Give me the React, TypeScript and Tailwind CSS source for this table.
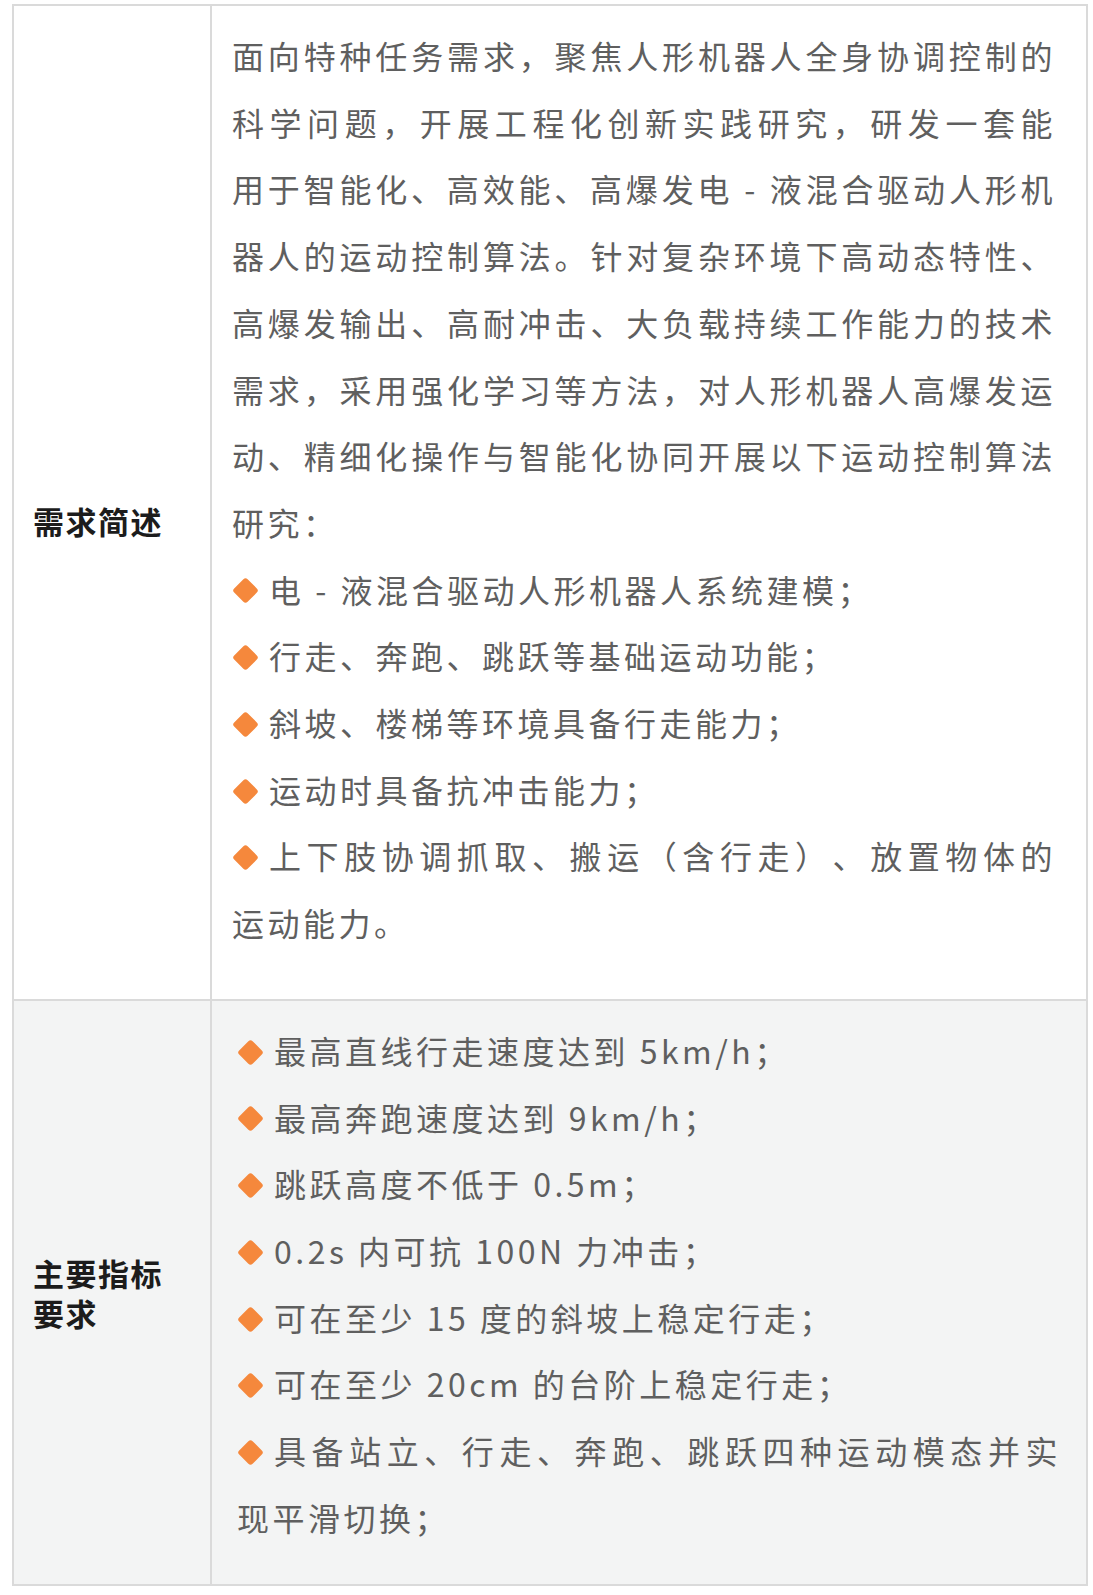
import React from "react";

const font = "font-['Noto_Sans_CJK_SC','Noto_Sans',sans-serif]";

const intro = [
  "面向特种任务需求，聚焦人形机器人全身协调控制的",
  "科学问题，开展工程化创新实践研究，研发一套能",
  "用于智能化、高效能、高爆发电 - 液混合驱动人形机",
  "器人的运动控制算法。针对复杂环境下高动态特性、",
  "高爆发输出、高耐冲击、大负载持续工作能力的技术",
  "需求，采用强化学习等方法，对人形机器人高爆发运",
  "动、精细化操作与智能化协同开展以下运动控制算法",
];

const tasks = [
  "电 - 液混合驱动人形机器人系统建模；",
  "行走、奔跑、跳跃等基础运动功能；",
  "斜坡、楼梯等环境具备行走能力；",
  "运动时具备抗冲击能力；",
];

const targets = [
  "最高直线行走速度达到 5km/h；",
  "最高奔跑速度达到 9km/h；",
  "跳跃高度不低于 0.5m；",
  "0.2s 内可抗 100N 力冲击；",
  "可在至少 15 度的斜坡上稳定行走；",
  "可在至少 20cm 的台阶上稳定行走；",
];

// orange rounded diamond used as the list marker
const Diamond = () => (
  <span className="mr-[11px] inline-flex h-[26px] w-[26px] shrink-0 translate-y-[2px] items-center justify-center">
    <span className="h-[19px] w-[19px] rotate-45 rounded-[3px] bg-[#f5883c]" />
  </span>
);

const Line = ({ text }: { text: string }) => (
  <div className="whitespace-nowrap">{text}</div>
);

const Justified = ({ text }: { text: string }) => (
  <div className="whitespace-nowrap text-justify [text-align-last:justify]">{text}</div>
);

const Bullet = ({ text, justify }: { text: string; justify?: boolean }) => (
  <div className="flex items-center">
    <Diamond />
    {justify ? (
      <div className="flex-1 whitespace-nowrap text-justify [text-align-last:justify]">{text}</div>
    ) : (
      <span className="whitespace-nowrap">{text}</span>
    )}
  </div>
);

const Heading = ({ lines }: { lines: string[] }) => (
  <div className="pl-[19px] text-[31px] font-bold tracking-[1.5px] text-[#1c1c1c]">
    {lines.map((l) => (
      <div key={l} className="h-[40px] leading-[40px]">
        {l}
      </div>
    ))}
  </div>
);

export default function App() {
  return (
    <div className={`min-h-[1595px] w-[1093px] bg-white pt-[4px] pl-[12px] ${font} [text-spacing-trim:space-all]`}>
      <div className="w-[1076px] border-2 border-[#dadada]">
        {/* row 1 */}
        <div className="grid grid-cols-[198px_1fr] border-b-2 border-[#dadada]">
          <div className="flex items-center border-r-2 border-[#dadada] pt-[38px]">
            <Heading lines={["需求简述"]} />
          </div>
          <div className="pt-[16px] pr-[30px] pb-[43px] pl-[20px] text-[32px] leading-[66.7px] tracking-[3.5px] text-[#5f5f5f]">
            {intro.map((t) => (
              <Justified key={t} text={t} />
            ))}
            <Line text="研究：" />
            {tasks.map((t) => (
              <Bullet key={t} text={t} />
            ))}
            <Bullet text="上下肢协调抓取、搬运（含行走）、放置物体的" justify />
            <Line text="运动能力。" />
          </div>
        </div>

        {/* row 2 */}
        <div className="grid grid-cols-[198px_1fr] bg-[#f3f4f4]">
          <div className="flex items-center border-r-2 border-[#dadada]">
            <Heading lines={["主要指标", "要求"]} />
          </div>
          <div className="pt-[16px] pr-[25px] pb-[34px] pl-[25px] text-[32px] leading-[66.7px] tracking-[3.5px] text-[#5f5f5f]">
            {targets.map((t) => (
              <Bullet key={t} text={t} />
            ))}
            <Bullet text="具备站立、行走、奔跑、跳跃四种运动模态并实" justify />
            <Line text="现平滑切换；" />
          </div>
        </div>
      </div>
    </div>
  );
}
